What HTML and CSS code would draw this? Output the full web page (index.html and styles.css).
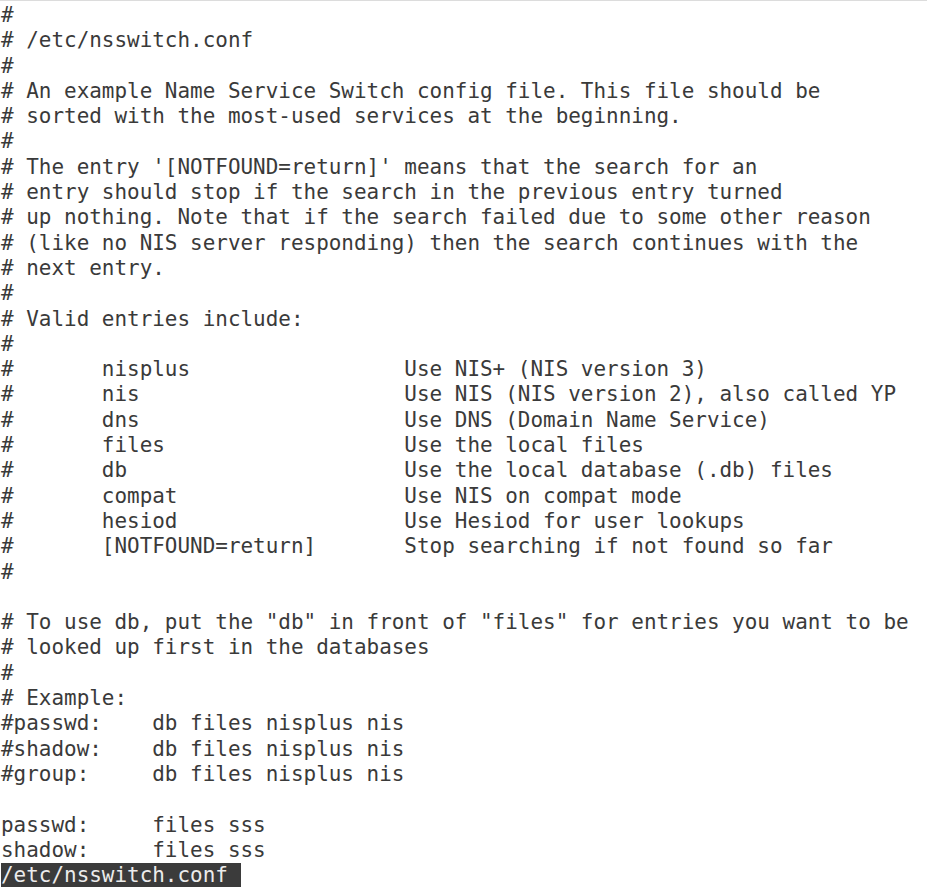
FILE: index.html
```html
<!DOCTYPE html>
<html lang="en">
<head>
<meta charset="utf-8">
<title>/etc/nsswitch.conf</title>
<link rel="stylesheet" href="styles.css">
</head>
<body>
<div class="terminal">
<pre class="buffer">#
# /etc/nsswitch.conf
#
# An example Name Service Switch config file. This file should be
# sorted with the most-used services at the beginning.
#
# The entry '[NOTFOUND=return]' means that the search for an
# entry should stop if the search in the previous entry turned
# up nothing. Note that if the search failed due to some other reason
# (like no NIS server responding) then the search continues with the
# next entry.
#
# Valid entries include:
#
#       nisplus                 Use NIS+ (NIS version 3)
#       nis                     Use NIS (NIS version 2), also called YP
#       dns                     Use DNS (Domain Name Service)
#       files                   Use the local files
#       db                      Use the local database (.db) files
#       compat                  Use NIS on compat mode
#       hesiod                  Use Hesiod for user lookups
#       [NOTFOUND=return]       Stop searching if not found so far
#

# To use db, put the "db" in front of "files" for entries you want to be
# looked up first in the databases
#
# Example:
#passwd:    db files nisplus nis
#shadow:    db files nisplus nis
#group:     db files nisplus nis

passwd:     files sss
shadow:     files sss
<span class="status">/etc/nsswitch.conf </span></pre>
</div>
</body>
</html>
```
FILE: styles.css
```css
html, body {
  margin: 0;
  padding: 0;
  background: #ffffff;
}

.terminal {
  border-top: 1px solid #dcdcdc;
  padding-top: 2px;
  padding-left: 1px;
}

.buffer {
  margin: 0;
  font-family: "DejaVu Sans Mono", monospace;
  font-size: 20.95px;
  line-height: 25.3px;
  color: #3a3a3a;
  white-space: pre;
  tab-size: 8;
}

.status {
  background: #3b3b3b;
  color: #ececec;
}
```
